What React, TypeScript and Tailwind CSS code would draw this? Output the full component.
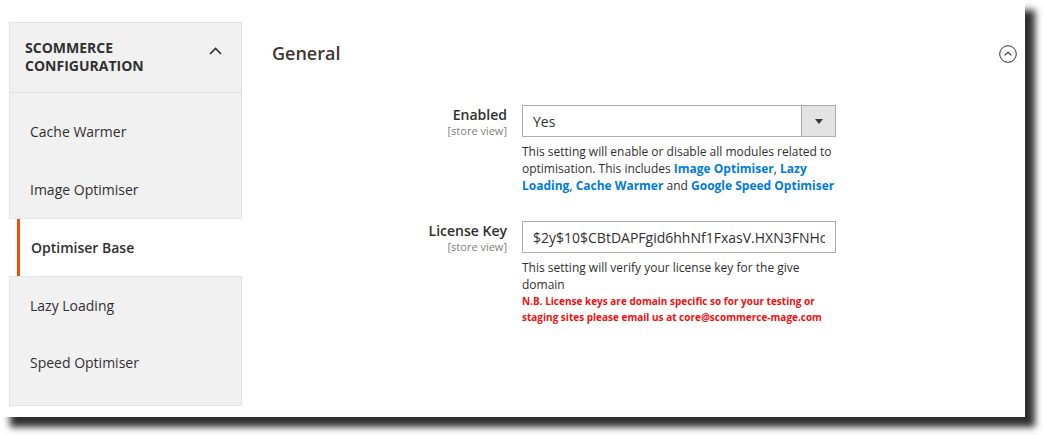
import React from 'react';

const font = { fontFamily: '"Open Sans", "Liberation Sans", sans-serif' };

const items = [
  { label: 'Cache Warmer', active: false },
  { label: 'Image Optimiser', active: false },
  { label: 'Optimiser Base', active: true },
  { label: 'Lazy Loading', active: false },
  { label: 'Speed Optimiser', active: false },
];

function Sidebar() {
  const before = items.slice(0, 2);
  const current = items[2];
  const after = items.slice(3);
  return (
    <div className="w-[233px] shrink-0">
      <div className="border border-[#e3e3e3] bg-[#f1f1f1] pl-[15px] pr-[19px] pt-[16px] pb-[17px] flex items-start justify-between">
        <div className="text-[14px] leading-[18px] font-bold uppercase text-[#303030]">
          Scommerce
          <br />
          Configuration
        </div>
        <svg width="13" height="8" viewBox="0 0 13 8" className="mt-[8px]">
          <path d="M1 7 L6.5 1.5 L12 7" fill="none" stroke="#303030" strokeWidth="1.6" />
        </svg>
      </div>
      <div className="border-x border-b border-[#e3e3e3] bg-[#f1f1f1] pt-[9px]">
        {before.map((item) => (
          <div key={item.label} className="h-[58px] flex items-center pl-[20px] text-[14px] text-[#303030]">
            {item.label}
          </div>
        ))}
      </div>
      <div className="h-[57px] ml-[8px] -mr-[2px] bg-white border-l-[3px] border-[#eb5202] flex items-center pl-[11px] text-[14px] font-semibold text-[#303030]">
        {current.label}
      </div>
      <div className="border border-[#e3e3e3] bg-[#f1f1f1] pb-[14px]">
        {after.map((item) => (
          <div key={item.label} className="h-[57px] flex items-center pl-[20px] text-[14px] text-[#303030]">
            {item.label}
          </div>
        ))}
      </div>
    </div>
  );
}

function FieldLabel({ text }: { text: string }) {
  return (
    <div className="w-[235px] shrink-0 text-right">
      <div className="text-[14px] leading-[19px] font-semibold text-[#303030]">{text}</div>
      <div className="text-[11px] leading-[12px] text-[#808080] mt-[1px]">[store view]</div>
    </div>
  );
}

function Link({ children }: { children: React.ReactNode }) {
  return <span className="font-bold text-[#007bdb]">{children}</span>;
}

export default function App() {
  return (
    <div className="w-[1043px] h-[435px] bg-white" style={font}>
      <div className="w-[1025px] h-[417px] bg-white shadow-[10px_10px_7px_rgba(0,0,0,0.82)] flex pl-[9px] pt-[22px]">
        <Sidebar />
        <div className="flex-1 ml-[30px] pr-[8px] pt-[18px]">
          <div className="flex items-start justify-between">
            <h2 className="mt-[2px] text-[18px] leading-[23px] font-semibold text-[#41362f]">General</h2>
            <svg width="18" height="18" viewBox="0 0 18 18" className="mt-[5px]">
              <circle cx="9" cy="9" r="8.3" fill="none" stroke="#303030" strokeWidth="1" />
              <path d="M5.6 10.4 L9 7.2 L12.4 10.4" fill="none" stroke="#303030" strokeWidth="1.2" />
            </svg>
          </div>

          <div className="mt-[40px] flex gap-[15px]">
            <FieldLabel text="Enabled" />
            <div className="w-[314px]">
              <div className="h-[32px] border border-[#adadad] flex bg-white">
                <div className="flex-1 flex items-center pl-[10px] text-[14px] text-[#303030]">Yes</div>
                <div className="w-[34px] bg-[#e3e3e3] border-l border-[#adadad] flex items-center justify-center">
                  <svg width="8" height="5" viewBox="0 0 8 5">
                    <path d="M0 0 L8 0 L4 5 Z" fill="#41362f" />
                  </svg>
                </div>
              </div>
              <div className="mt-[6px] text-[12px] leading-[17px] text-[#303030] whitespace-nowrap">
                This setting will enable or disable all modules related to
                <br />
                optimisation. This includes <Link>Image Optimiser</Link>, <Link>Lazy</Link>
                <br />
                <Link>Loading</Link>, <Link>Cache Warmer</Link> and <Link>Google Speed Optimiser</Link>
              </div>
            </div>
          </div>

          <div className="mt-[27px] flex gap-[15px]">
            <FieldLabel text="License Key" />
            <div className="w-[314px]">
              <input
                readOnly
                value="$2y$10$CBtDAPFgid6hhNf1FxasV.HXN3FNHcQkX8"
                className="w-full h-[32px] border border-[#adadad] px-[10px] text-[14px] text-[#303030] bg-white outline-none"
                style={font}
              />
              <div className="mt-[6px] text-[12px] leading-[17px] text-[#303030] whitespace-nowrap">
                This setting will verify your license key for the give
                <br />
                domain
              </div>
              <div className="text-[10px] leading-[16px] font-bold text-[#f20f0f] whitespace-nowrap">
                N.B. License keys are domain specific so for your testing or
                <br />
                staging sites please email us at core@scommerce-mage.com
              </div>
            </div>
          </div>
        </div>
      </div>
    </div>
  );
}
